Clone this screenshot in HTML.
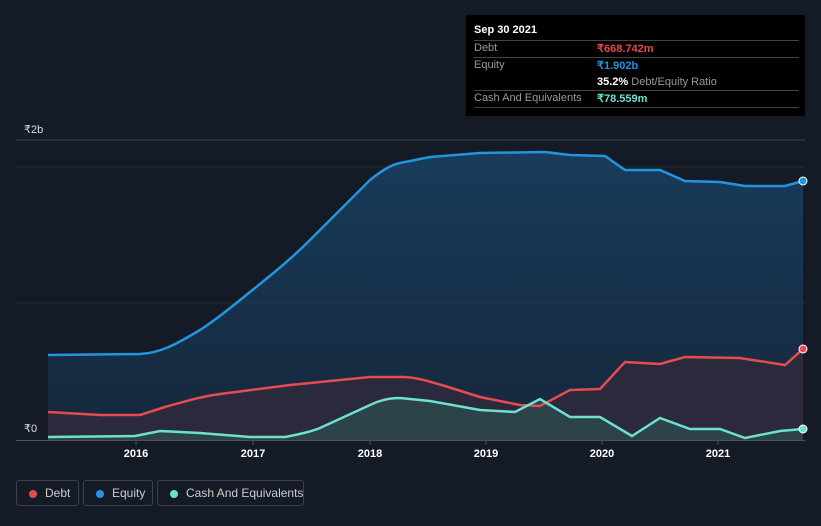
<!DOCTYPE html>
<html><head><meta charset="utf-8"><style>
body{margin:0;width:821px;height:526px;background:#151b26;font-family:"Liberation Sans",sans-serif;overflow:hidden;position:relative}
.tip{position:absolute;left:466px;top:15px;width:339px;height:101px;background:#000;color:#fff;font-size:11px;white-space:nowrap}
.row{position:absolute;left:8px;right:6px;border-top:1px solid #444;height:17px}
.lbl{position:absolute;left:0;color:#999}
.val{position:absolute;left:123px;font-weight:bold}
.leg{position:absolute;top:480px;height:26px;border:1px solid #3a404c;border-radius:3px;color:#ccc;font-size:12px;line-height:24px;box-sizing:border-box;white-space:nowrap}
.leg i{position:absolute;left:12px;top:9px;width:8px;height:8px;border-radius:50%}
.leg span{position:absolute;left:28px}
</style></head><body>
<svg width="821" height="526" style="position:absolute;left:0;top:0">
<defs>
<linearGradient id="eg" x1="0" y1="0" x2="0" y2="1"><stop offset="0" stop-color="#1a4a72" stop-opacity=".7"/><stop offset="1" stop-color="#16304a" stop-opacity=".6"/></linearGradient>
</defs>
<line x1="16" y1="140" x2="805" y2="140" stroke="#3d4450"/>
<line x1="16" y1="167" x2="805" y2="167" stroke="#262c37"/>
<line x1="16" y1="303" x2="805" y2="303" stroke="#262c37"/>
<path fill="url(#eg)" d="M48,355 L140,354 C160,353 175,345 200,330 C220,317 240,300 250,292 C270,276 290,260 310,240 C330,220 350,200 370,180 C380,172 390,165 400,163 L430,157 L480,153 L545,152 L570,155 L605,156 L625,170 L660,170 L685,181 L720,182 L745,186 L785,186 L803,181 L803,440 L48,440Z"/>
<path fill="#3a2a3a" fill-opacity=".6" d="M48,412 L100,415 L140,415 L165,407 C190,400 200,397 220,394 L290,385 L370,377 L405,377 C420,378 430,382 445,386 L480,397 L520,405 L540,406 L570,390 L600,389 L625,362 L660,364 L685,357 L740,358 L785,365 L803,349 L803,440 L48,440Z"/>
<path fill="#2e5a58" fill-opacity=".55" d="M48,437 L135,436 L160,431 L200,433 L250,437 L285,437 C300,434 310,432 320,428 L370,405 C380,400 390,398 400,398 L430,401 L480,410 L515,412 L540,399 L570,417 L600,417 L632,436 L660,418 L690,429 L720,429 L745,438 L780,431 L803,429 L803,440 L48,440Z"/>
<path fill="none" stroke="#2394df" stroke-width="2.5" d="M48,355 L140,354 C160,353 175,345 200,330 C220,317 240,300 250,292 C270,276 290,260 310,240 C330,220 350,200 370,180 C380,172 390,165 400,163 L430,157 L480,153 L545,152 L570,155 L605,156 L625,170 L660,170 L685,181 L720,182 L745,186 L785,186 L803,181"/>
<path fill="none" stroke="#e64b52" stroke-width="2.5" d="M48,412 L100,415 L140,415 L165,407 C190,400 200,397 220,394 L290,385 L370,377 L405,377 C420,378 430,382 445,386 L480,397 L520,405 L540,406 L570,390 L600,389 L625,362 L660,364 L685,357 L740,358 L785,365 L803,349"/>
<path fill="none" stroke="#6de0d0" stroke-width="2.5" d="M48,437 L135,436 L160,431 L200,433 L250,437 L285,437 C300,434 310,432 320,428 L370,405 C380,400 390,398 400,398 L430,401 L480,410 L515,412 L540,399 L570,417 L600,417 L632,436 L660,418 L690,429 L720,429 L745,438 L780,431 L803,429"/>
<line x1="16" y1="440.5" x2="805" y2="440.5" stroke="#4a505c"/>
<g stroke="#4a505c"><line x1="136" y1="440" x2="136" y2="445"/><line x1="253" y1="440" x2="253" y2="445"/><line x1="370" y1="440" x2="370" y2="445"/><line x1="486" y1="440" x2="486" y2="445"/><line x1="602" y1="440" x2="602" y2="445"/><line x1="718" y1="440" x2="718" y2="445"/></g>
<circle cx="803" cy="181" r="4" fill="#2394df" stroke="#fff" stroke-width="1"/>
<circle cx="803" cy="349" r="4" fill="#e64b52" stroke="#fff" stroke-width="1"/>
<circle cx="803" cy="429" r="4" fill="#6de0d0" stroke="#fff" stroke-width="1"/>
<g fill="#fff" font-size="11" font-family="Liberation Sans,sans-serif" text-anchor="middle" font-weight="bold">
<text x="136" y="457">2016</text><text x="253" y="457">2017</text><text x="370" y="457">2018</text><text x="486" y="457">2019</text><text x="602" y="457">2020</text><text x="718" y="457">2021</text></g>
<g fill="#ddd" font-size="11" font-family="Liberation Sans,sans-serif"><text x="24" y="133">₹2b</text><text x="24" y="432">₹0</text></g>
</svg>
<div class="tip">
<div style="position:absolute;left:8px;top:9px;font-weight:bold">Sep 30 2021</div>
<div class="row" style="top:25px"><span class="lbl" style="top:1px">Debt</span><span class="val" style="top:1px;color:#e5484d">₹668.742m</span></div>
<div class="row" style="top:42px"><span class="lbl" style="top:1px">Equity</span><span class="val" style="top:1px;color:#2394df">₹1.902b</span><span style="position:absolute;left:123px;top:18px"><b>35.2%</b> <span style="color:#999">Debt/Equity Ratio</span></span></div>
<div class="row" style="top:75px"><span class="lbl" style="top:1px">Cash And Equivalents</span><span class="val" style="top:1px;color:#6de0d0">₹78.559m</span></div>
<div class="row" style="top:92px"></div>
</div>
<div class="leg" style="left:16px;width:63px"><i style="background:#e64b52"></i><span>Debt</span></div>
<div class="leg" style="left:83px;width:70px"><i style="background:#2394df"></i><span>Equity</span></div>
<div class="leg" style="left:157px;width:147px"><i style="background:#6de0d0"></i><span>Cash And Equivalents</span></div>
</body></html>
